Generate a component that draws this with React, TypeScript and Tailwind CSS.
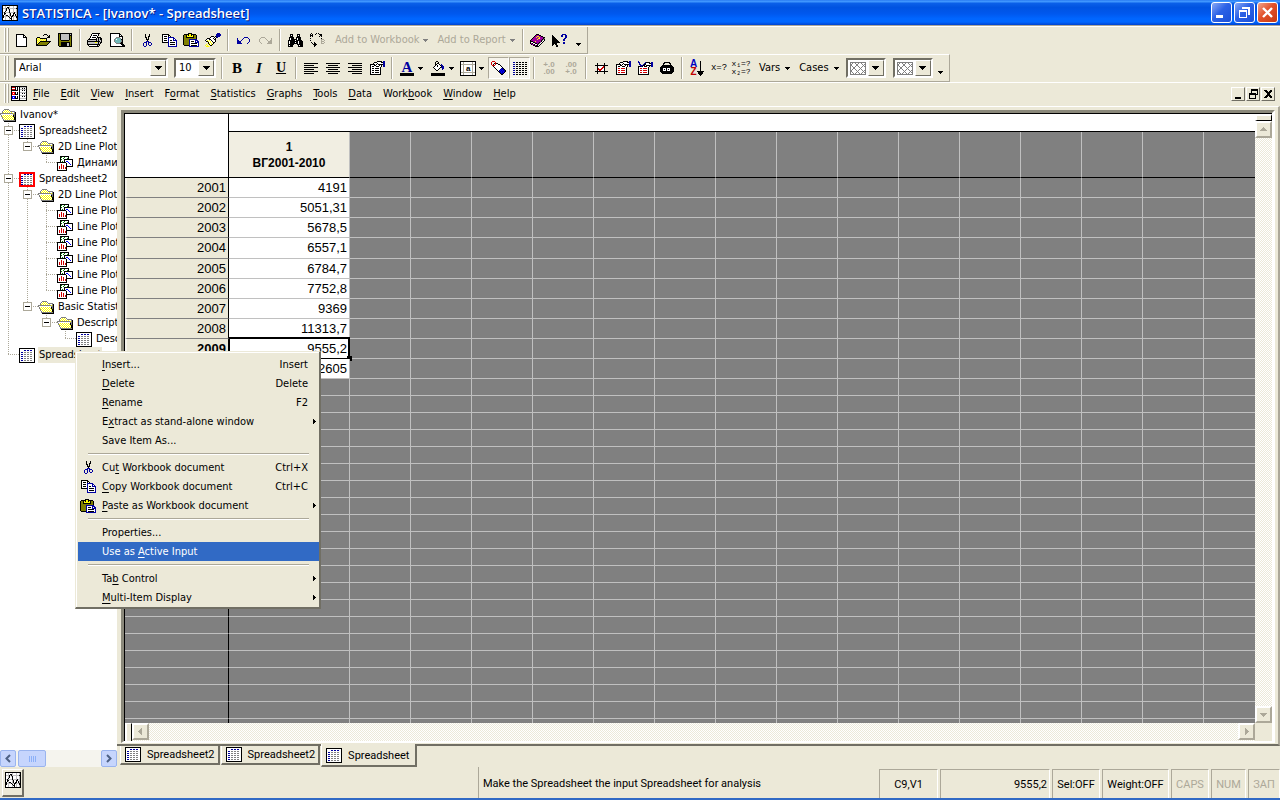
import { FC, ReactNode } from 'react'

const COLORS: Record<string, string> = {
    k: '#000000',
    w: '#ffffff',
    g: '#808080',
    l: '#c0c0c0',
    s: '#aca899',
    b: '#0000a0',
    B: '#0000ff',
    o: '#808000',
    Y: '#ffff00',
    y: '#fff68c',
    p: '#a000a0',
    r: '#d00000',
    R: '#ff0000',
    c: '#70b8b8',
    G: '#008000'
}

interface IPixels {
    rows: string[]
}

const Pixels: FC<IPixels> = ({ rows }) => {
    const width = Math.max(...rows.map((row) => row.length))
    return (
        <svg
            width={width}
            height={rows.length}
            viewBox={`0 0 ${width} ${rows.length}`}
            shapeRendering="crispEdges"
            className="shrink-0"
            aria-hidden="true"
        >
            {rows.map((row, y) =>
                row.split('').map((char, x) =>
                    COLORS[char] ? <rect key={`${x}-${y}`} x={x} y={y} width={1} height={1} fill={COLORS[char]} /> : null
                )
            )}
        </svg>
    )
}

const newIcon = [
    'kkkkkkkk...',
    'kwwwwwwkk..',
    'kwwwwwwkwk.',
    'kwwwwwwkkkk',
    'kwwwwwwwwwk',
    'kwwwwwwwwwk',
    'kwwwwwwwwwk',
    'kwwwwwwwwwk',
    'kwwwwwwwwwk',
    'kwwwwwwwwwk',
    'kwwwwwwwwwk',
    'kwwwwwwwwwk',
    'kkkkkkkkkkk'
]
const openIcon = [
    '.........kkk....',
    '........k...k.k.',
    '.............kk.',
    '..kkk.......kkk.',
    '.kYyYkkkkkkk....',
    '.kyYyYyYyYyk....',
    '.kYyYyYyYyYk....',
    '.kyYykkkkkkkkkkk',
    '.kYykoooooooook.',
    '.kykoooooooook..',
    '.kkoooooooook...',
    '.kkkkkkkkkkk....'
]
const saveIcon = [
    'kkkkkkkkkkkkkk',
    'kokllllllllklk',
    'kokllllllllkkk',
    'kokllllllllkok',
    'kokllllllllkok',
    'kokllllllllkok',
    'kokllllllllkok',
    'kookkkkkkkkook',
    'kooooooooooook',
    'kookkkkkkkkkok',
    'kookkkkkkllkok',
    'kookkkkkkllkok',
    'kookkkkkkllkok',
    '.kkkkkkkkkkkkk'
]
const printIcon = [
    '.....kkkkkkkk...',
    '....kwwwwwwk....',
    '....kwkkkkwk....',
    '...kwwwwwwk.....',
    '...kwkkkkwkkkk..',
    '..kwwwwwwk.klkk.',
    '.kkkkkkkkklklkk.',
    'kllllllllklkllk.',
    'kkkkkkkkkkkkklk.',
    'klllllllYYlklkk.',
    'kllllllllllklk..',
    'kkkkkkkkkkkkk...',
    '.kwwwwwwwwklk...',
    '..kkkkkkkkkk....'
]
const previewIcon = [
    'kkkkkkkkkk.....',
    'kwwwwwwwwkk....',
    'kwwwwwwwwkwk...',
    'kwwwwwwwwkkkk..',
    'kwwwwwggggwwk..',
    'kwwwwgccccgwk..',
    'kwwwgcwcccckk..',
    'kwwwgccccccgk..',
    'kwwwgccccccgk..',
    'kwwwwgccccgkk..',
    'kwwwwwggggkkk..',
    'kwwwwwwwwwwkkk.',
    'kwwwwwwwwwwwkkk',
    'kkkkkkkkkkkkkkk'
]
const cutIcon = [
    '..k...k..',
    '..k...k..',
    '..k..kk..',
    '..kk.k...',
    '...k.k...',
    '...kkk...',
    '....k....',
    '...bbb...',
    '.bbb.bbb.',
    'b..b.b..b',
    'b..b.b..b',
    'b..b..bb.',
    '.bb......'
]
const copyIcon = [
    'kkkkkkk........',
    'kwwwwwkk.......',
    'kwkkkwkwk......',
    'kwwwwwbbbbbb...',
    'kwkkkwbwwwwbb..',
    'kwwwwwbwwwwbwb.',
    'kwkkkwbwkkwbbbb',
    'kwwwwwbwwwwwwwb',
    'kkkkkkbwkkkkkwb',
    '......bwwwwwwwb',
    '......bwkkkkkwb',
    '......bwwwwwwwb',
    '......bbbbbbbbb'
]
const pasteIcon = [
    '.....kkkk.......',
    '.kkkkkYYkkkkk...',
    'kookYkYYkYkook..',
    'kookYYYYYYkook..',
    'kookkkkkkkkook..',
    'kooooooooooook..',
    'kooooobbbbbbbb..',
    'kooooobwwwwwbbb.',
    'kooooobwkkkwbwbb',
    'kooooobwwwwwbbbb',
    'kooooobwkkkkkkwb',
    'kooooobwwwwwwwwb',
    '.kkkkkbwkkkkkkwb',
    '......bbbbbbbbbb'
]
const brushIcon = [
    '............bbb.',
    '...........bbbbb',
    '...........bbbbb',
    '......kkk.kbbbb.',
    '.....kwwwkwkb...',
    '..kkkwwwkwk.....',
    '.kwwkkwwwkk.....',
    'kwYwYwkwwwk.....',
    '.kkYwYwkwwk.....',
    '...kwYwykk......',
    '..ykYwYwk.......',
    '.Y.ykwYk........',
    'Y.Y.ykk.........',
    '.YYYy...........'
]
const undoIcon = [
    '.......bbbb..',
    'b.....b....b.',
    'b....b......b',
    'bb..b.......b',
    'bbbb........b',
    'bbbb.......b.',
    'bbbbb.....b..'
]
const redoIcon = undoIcon.map((row) => row.split('').reverse().join('').replace(/b/g, 's'))
const findIcon = [
    '..kkk....kkk...',
    '..kwk....kwk...',
    '..kkk....kkk...',
    '.kkkkk..kkkkk..',
    '.kwkkk..kwkkk..',
    '.kwkkkkkkwkkk..',
    'kkkkkkkwkkkkkk.',
    'kwkkkkkkkkwkkkk',
    'kwkkkkkwkkwkkkk',
    'kwkkkkkkkkwkkkk',
    'kkkkkk...kkkkkk',
    'kwkkk.....kwkkk',
    'kkkkk.....kkkkk'
]
const replaceIcon = [
    '..k....k.k......',
    '.k.k..k...kkk...',
    '.kkk.......kk...',
    '.k.k......k.k...',
    '................',
    '.k..........k...',
    '............sss.',
    '.k..........s..s',
    '............sss.',
    '..k..k......s..s',
    '...k.kk.....sss.',
    '....kkkk........',
    '.....kk.........',
    '.....k..........'
]
const bookIcon = [
    '......kkk......',
    '.....kpppkk....',
    '....kppYYppkk..',
    '...kppYppYpppkk',
    '..kpppppYYpppkg',
    '.kpppppYppppkgk',
    'kppppppppppkgwk',
    'kkkppYpppppkwk.',
    'kwwkkppppkgwk..',
    'kpkwwkkpkgwk...',
    '.kppkwwkgwk....',
    '...kkpkkwk.....',
    '.....kkkk......'
]
const pointerHelpIcon = [
    '..........bbbb..',
    'k........bb..bb.',
    'kk.......bb..bb.',
    'kkk..........bb.',
    'kkkk........bb..',
    'kkkkk......bb...',
    'kkkkkk.....bb...',
    'kkkkkkk.........',
    'kkkkkkkk...bb...',
    'kkkkk......bb...',
    'kk.kk...........',
    'k...kk..........',
    '....kk..........'
]
const handIcon = [
    '.......kkkkk.bb',
    '....kkkwwwwkkbb',
    '...kwwwkwwwwwbb',
    'kkkkkwkwkkkkkbb',
    'kwwwkkwwwkwk.bb',
    'kwkkwwkkkwwk.bb',
    'kwwwwwwwwwk....',
    'kwkkwkkkkwk....',
    'kwwwwwwwwwk....',
    'kwkkwkkkkwk....',
    'kwwwwwwwwwk....',
    'kwkkwkkkkwk....',
    'kwwwwwwwwwk....',
    'kkkkkkkkkkk....'
]
const redHandIcon = handIcon.map((row, i) => (i > 6 ? row.replace('wkkwkkkkw', 'wrrwrrrrw') : row))
const checkHandTop = [
    'b..............',
    'bb.....bkkkk.bb',
    '.b....bkwwwkkbb',
    '.bb..bkkwwwwwbb',
    '..bbbkkwkkkkkbb',
    'kkkbkwkkkwwk.bb'
]
const checkHandIcon = redHandIcon.map((row, i) => checkHandTop[i] ?? row)
const fillIcon = [
    '....kk......',
    '...k..k.....',
    '...k.kk.....',
    '...kkwwk.b..',
    '...kwkwwkbb.',
    '..kwwkwwwkbb',
    '.kwwwwwwkbbb',
    '..kwwwwk..bb',
    '...kwwk...b.',
    '....kk......'
]
const eraseIcon = [
    '.rrr............',
    'r...r...........',
    'r..krkk.........',
    'r.kwrwwkk.......',
    '.rrrwwwwwk......',
    '..kwwwwwwwk.....',
    '...kwwwwwwwk....',
    '....kwwwwwbbk...',
    '.....kwwwbBbbk..',
    '......kwbBbBbbk.',
    '.......kbbBbBbk.',
    '........kbBbBk..',
    '.........kbbk...',
    '..........kk....'
]
const linesIcon = [
    'bb.kk.kk.kk.kk',
    '..............',
    'bb.kk.kk.kk.kk',
    '..............',
    'bb.kk.kk.kk.kk',
    '..............',
    'bb.kk.kk.kk.kk',
    '..............',
    'bb.kk.kk.kk.kk',
    '..............',
    'bb.kk.kk.kk.kk',
    '..............',
    'bb.kk.kk.kk.kk'
]
const frameCheckIcon = [
    '..k......k...',
    '..k......k...',
    'kkkkkkkkkkkkk',
    '..kwwwwwrk...',
    '..kwwwwrrk...',
    '..krwwrrwk...',
    '..krrrrwwk...',
    '..kwrrwwwk...',
    'kkkkkkkkkkkkk',
    '..k......k...',
    '..k......k...'
]
const lockIcon = [
    '....kkkkkk....',
    '...kk....kk...',
    '...k......k...',
    '..kkkkkkkkkk..',
    '.kkkkkkkkkkkk.',
    'kkkkkkkkkkkkkk',
    'kkkwwwkwwwkkkk',
    'kkkwkwkwkwkkkk',
    'kkkwwwkwwwkkkk',
    'kkkkkkkkkkkkkk',
    '.kkkkkkkkkkkk.',
    '..kkkkkkkkkk..'
]
const sheetIcon = [
    'kkkkkkkkkkkkkkkk',
    'kwwwwwwwwwwwwwwk',
    'kwwwwbbwbbwbbwwk',
    'kwwwwwwwwwwwwwwk',
    'kwbbwggwggwggwwk',
    'kwwwwwwwwwwwwwwk',
    'kwbbwggwggwggwwk',
    'kwwwwwwwwwwwwwwk',
    'kwbbwggwggwggwwk',
    'kwwwwwwwwwwwwwwk',
    'kwbbwggwggwggwwk',
    'kwwwwwwwwwwwwwwk',
    'kwbbwggwggwggwwk',
    'kwwwwwwwwwwwwwwk',
    'kkkkkkkkkkkkkkkk'
]
const redSheetIcon = sheetIcon.map((row, i) =>
    i < 2 || i > 12 ? 'RRRRRRRRRRRRRRRR' : `RR${row.slice(2, 14)}RR`
)
const folderIcon = [
    '....ggggg.......',
    '...gwYwYwg......',
    '..gwYwYwYwggggg.',
    '..gYwYwYwYwYwwgk',
    'gggggggggggggYgk',
    'gwwwwwwwwwwwwggk',
    '.gwYwYwYwYwYwkgk',
    '.gYwYwYwYwYwYkgk',
    '..gYwYwYwYwYwYkk',
    '..gwYwYwYwYwYwkk',
    '...gwYwYwYwYwYkk',
    '...ggggggggggggk',
    '....kkkkkkkkkkkk'
]
const plotIcon = [
    '...kkkkkkkkk....',
    '...kGwwGwwwk....',
    '...kwwGwwwGk....',
    '...kGwwkkkkkkkkk',
    '...kwwwkwwwwwwwk',
    '...kwGwkwBBwwwwk',
    'kkkkkkkkkwwBwwwk',
    'kwwwwwwwwkwwBwwk',
    'kwwwrwwwwkwwwBwk',
    'kwwwrwrwwkwwwwwk',
    'kwrwrwrwwkkkkkkk',
    'kwrwrwrwrk......',
    'kwrwrwrwrk......',
    'kwwwwwwwwk......',
    'kkkkkkkkkk......'
]
const appIcon = [
    'kkkkkkkkkkkkkkkk',
    'kwwlwwwlwwwlwwlk',
    'kwwlwkklwwwlwwlk',
    'klllklklllllllkk',
    'kwwlkwlkwwwlwwlk',
    'kwwlkwwkwwwlwwlk',
    'kwwkwwwkwwwlwwlk',
    'klkllllkllllkllk',
    'kwkkwwwlkwwkkwlk',
    'kwklwwwlkwwkwklk',
    'kkwlkkwlkwkkwklk',
    'kkllllkllkklllkk',
    'kkwlwwwkwkwlwwkk',
    'kwwlwwwlkkwlwwlk',
    'kwwlwwwlwkwlwwlk',
    'kkkkkkkkkkkkkkkk'
]
const bookWindowIcon = [
    'kkkkkkkkkkkkkkkk',
    'krrrkwkwkllllllk',
    'kwwwkwkwkwwkwkwk',
    'krrrkwkwkllllllk',
    'kkkkkkkwkwwkwkwk',
    'kwwwwwwwkwwwwwwk',
    'kRRRkwkwkllllllk',
    'kRwRkwkwkwwkwkwk',
    'kRRRkkkwkwwwwwwk',
    'kwwwwwwwkllllllk',
    'kBBBkwkwkwwkwkwk',
    'kBwBkwkwkwwwwwwk',
    'kBBBkkkwkllllllk',
    'kwwwwwwwkwwwwwwk',
    'kkkkkkkkkkkkkkkk'
]
const downArrow = ['kkkkkkk', '.kkkkk.', '..kkk..', '...k...']
const smallArrow = ['kkkkk', '.kkk.', '..k..']
const grayArrow = ['ggggg', '.ggg.', '..g..']
const rightArrow = ['k..', 'kk.', 'kkk', 'kk.', 'k..']

// "&" stands before the underlined access key
const Hot: FC<{ text: string }> = ({ text }) => {
    const [before, after] = text.split('&')
    if (after === undefined) return <>{text}</>
    return (
        <>
            {before}
            <span className="underline underline-offset-2">{after[0]}</span>
            {after.slice(1)}
        </>
    )
}

const ToolButton: FC<{ label: string; children: ReactNode }> = ({ label, children }) => (
    <button type="button" aria-label={label} className="flex h-[22px] w-[22px] shrink-0 items-center justify-center">
        {children}
    </button>
)

const Separator: FC = () => (
    <div className="flex w-2 shrink-0 justify-center self-stretch py-[2px]">
        <div className="w-[2px] border-l border-r border-l-[#aca899] border-r-white"></div>
    </div>
)

const Gripper: FC = () => (
    <div className="ml-1 mr-px flex shrink-0 gap-px self-stretch py-px">
        <div className="w-[2px] border-l border-r border-l-white border-r-[#aca899]"></div>
        <div className="w-[2px] border-l border-r border-l-white border-r-[#aca899]"></div>
    </div>
)

const Chevron: FC = () => (
    <button type="button" aria-label="Toolbar options" className="flex w-4 items-end justify-center self-stretch pb-[7px]">
        <Pixels rows={smallArrow} />
    </button>
)

const ArrowFace: FC = () => (
    <span className="pointer-events-none flex h-4 w-4 items-center justify-center border border-b-[#716f64] border-l-white border-r-[#716f64] border-t-white bg-[#ece9d8]">
        <Pixels rows={downArrow} />
    </span>
)

const Combo: FC<{ label: string; value: string; wide?: boolean }> = ({ label, value, wide }) => (
    <div
        className={`grid h-5 shrink-0 items-center border-2 border-b-white border-l-[#716f64] border-r-white border-t-[#716f64] bg-white ${wide ? 'w-[154px]' : 'w-[42px]'}`}
    >
        <select aria-label={label} className="col-start-1 row-start-1 h-4 appearance-none bg-transparent pl-[3px] leading-4 outline-none">
            <option>{value}</option>
        </select>
        <div className="pointer-events-none col-start-1 row-start-1 justify-self-end">
            <ArrowFace />
        </div>
    </div>
)

const PatternCombo: FC<{ label: string }> = ({ label }) => (
    <button
        type="button"
        aria-label={label}
        className="flex h-5 w-10 shrink-0 items-center justify-between border-2 border-b-white border-l-[#716f64] border-r-white border-t-[#716f64] bg-white pl-[2px]"
    >
        <svg width="16" height="13" viewBox="0 0 16 13" shapeRendering="crispEdges">
            <path d="M.5 .5h15v12h-15zM1 3l3-3 12 12M1 9l9-9 6 6M1 3l10 10M1 9l4 4M4 13L16 1M10 13l6-6M1 9L10 0" fill="none" stroke="#808080" />
        </svg>
        <ArrowFace />
    </button>
)

const AlignIcon: FC<{ kind: 'left' | 'center' | 'right' }> = ({ kind }) => (
    <span
        className={`flex w-[14px] flex-col gap-px ${kind === 'left' ? 'items-start' : kind === 'center' ? 'items-center' : 'items-end'}`}
    >
        {[14, 10, 14, 10, 14, 10].map((width, i) => (
            <span key={i} className="h-px bg-black" style={{ width }}></span>
        ))}
    </span>
)

const TitleBar: FC = () => (
    <header className="flex h-[26px] shrink-0 items-center border-b border-b-[#aca899] bg-[linear-gradient(#2a7cf2_0%,#3f96fe_6%,#0a5fe8_14%,#0053e1_30%,#0058ee_55%,#0066ff_75%,#0066ff_88%,#0043cf_100%)] px-[2px]">
        <Pixels rows={appIcon} />
        <h1 className="ml-1 flex-1 whitespace-nowrap font-['Open_Sans','Noto_Sans',sans-serif] text-[13px] font-semibold text-white [text-shadow:1px_1px_#0a1883]">
            STATISTICA - [Ivanov* - Spreadsheet]
        </h1>
        <div className="flex gap-[2px]">
            <button type="button" aria-label="Minimize" className="h-[21px] w-[21px] rounded-[3px] border border-white bg-[linear-gradient(135deg,#8aa9f5,#2c62e6_45%,#1a4fd8)]">
                <svg width="19" height="19"><path d="M4 12h7v3H4z" fill="#fff" /></svg>
            </button>
            <button type="button" aria-label="Restore" className="h-[21px] w-[21px] rounded-[3px] border border-white bg-[linear-gradient(135deg,#8aa9f5,#2c62e6_45%,#1a4fd8)]">
                <svg width="19" height="19" shapeRendering="crispEdges">
                    <path d="M4 7h8v8H4zM5 9v5h6V9zM7 4h8v8h-2V6H7z" fill="#fff" fillRule="evenodd" />
                </svg>
            </button>
            <button type="button" aria-label="Close" className="h-[21px] w-[21px] rounded-[3px] border border-white bg-[linear-gradient(135deg,#f0a48c,#e2512a_45%,#c63a12)]">
                <svg width="19" height="19"><path d="M5 5l9 9M14 5l-9 9" stroke="#fff" strokeWidth="2.4" /></svg>
            </button>
        </div>
    </header>
)

const StandardToolbar: FC = () => (
    <div role="toolbar" aria-label="Standard" className="flex h-[27px] w-fit shrink-0 items-center border-b border-r border-b-[#aca899] border-r-[#aca899]">
        <Gripper />
        <ToolButton label="New"><Pixels rows={newIcon} /></ToolButton>
        <ToolButton label="Open"><Pixels rows={openIcon} /></ToolButton>
        <ToolButton label="Save"><Pixels rows={saveIcon} /></ToolButton>
        <Separator />
        <ToolButton label="Print"><Pixels rows={printIcon} /></ToolButton>
        <ToolButton label="Print Preview"><Pixels rows={previewIcon} /></ToolButton>
        <Separator />
        <ToolButton label="Cut"><Pixels rows={cutIcon} /></ToolButton>
        <ToolButton label="Copy"><Pixels rows={copyIcon} /></ToolButton>
        <ToolButton label="Paste"><Pixels rows={pasteIcon} /></ToolButton>
        <ToolButton label="Format Painter"><Pixels rows={brushIcon} /></ToolButton>
        <Separator />
        <ToolButton label="Undo"><Pixels rows={undoIcon} /></ToolButton>
        <ToolButton label="Redo"><Pixels rows={redoIcon} /></ToolButton>
        <Separator />
        <ToolButton label="Find"><Pixels rows={findIcon} /></ToolButton>
        <ToolButton label="Replace"><Pixels rows={replaceIcon} /></ToolButton>
        <button type="button" className="ml-[7px] flex items-center gap-1 whitespace-nowrap text-[#aca899]">
            Add to Workbook
            <Pixels rows={grayArrow} />
        </button>
        <button type="button" className="ml-[9px] flex items-center gap-1 whitespace-nowrap text-[#aca899]">
            Add to Report
            <Pixels rows={grayArrow} />
        </button>
        <div className="w-1"></div>
        <Separator />
        <ToolButton label="Help"><Pixels rows={bookIcon} /></ToolButton>
        <ToolButton label="What is this?"><Pixels rows={pointerHelpIcon} /></ToolButton>
        <Chevron />
    </div>
)

const FormatToolbar: FC = () => (
    <div role="toolbar" aria-label="Formatting" className="flex h-7 w-fit shrink-0 items-center border-b border-r border-t border-b-[#aca899] border-r-[#aca899] border-t-white">
        <Gripper />
        <div className="ml-1 flex gap-[6px]">
            <Combo label="Font" value="Arial" wide />
            <Combo label="Font size" value="10" />
        </div>
        <div className="w-[2px]"></div>
        <Separator />
        <ToolButton label="Bold"><span className="font-['Liberation_Serif',serif] text-[15px] font-bold">B</span></ToolButton>
        <ToolButton label="Italic"><span className="font-['Liberation_Serif',serif] text-[15px] font-bold italic">I</span></ToolButton>
        <ToolButton label="Underline"><span className="font-['Liberation_Serif',serif] text-[14px] font-bold underline">U</span></ToolButton>
        <Separator />
        <ToolButton label="Align left"><AlignIcon kind="left" /></ToolButton>
        <ToolButton label="Center"><AlignIcon kind="center" /></ToolButton>
        <ToolButton label="Align right"><AlignIcon kind="right" /></ToolButton>
        <ToolButton label="Format cells"><Pixels rows={handIcon} /></ToolButton>
        <Separator />
        <ToolButton label="Font color">
            <span className="border-b-[3px] border-b-black px-[2px] font-['Liberation_Serif',serif] text-[15px] font-bold leading-[12px] text-[#0000a0]">A</span>
        </ToolButton>
        <Pixels rows={smallArrow} />
        <div className="w-1"></div>
        <ToolButton label="Background color">
            <span className="flex flex-col items-center border-b-[3px] border-b-black px-px pb-[2px]"><Pixels rows={fillIcon} /></span>
        </ToolButton>
        <Pixels rows={smallArrow} />
        <div className="w-[3px]"></div>
        <ToolButton label="Borders">
            <svg width="16" height="15" shapeRendering="crispEdges">
                <path d="M.5 .5h15v14H.5z" fill="#fff" stroke="#000" />
                <path d="M3.5 1v13M12.5 1v13M1 3.5h14M1 11.5h14" stroke="#aca899" />
                <text x="6" y="10" fontSize="8" fontWeight="bold" fontFamily="Liberation Sans">a</text>
            </svg>
        </ToolButton>
        <Pixels rows={smallArrow} />
        <div className="ml-1 flex">
            {[eraseIcon, linesIcon].map((rows, i) => (
                <button
                    key={i}
                    type="button"
                    aria-pressed="true"
                    aria-label={i ? 'Show gridlines' : 'Mark cells'}
                    className="flex h-[22px] w-[21px] items-center justify-center border border-b-white border-l-[#aca899] border-r-white border-t-[#aca899] bg-[#f6f4ec]"
                >
                    <Pixels rows={rows} />
                </button>
            ))}
        </div>
        <Separator />
        <ToolButton label="Increase decimals">
            <span className="text-right font-['Liberation_Sans',sans-serif] text-[8px] font-bold leading-[7px] text-[#aca899]">+.0<br />.00</span>
        </ToolButton>
        <ToolButton label="Decrease decimals">
            <span className="text-right font-['Liberation_Sans',sans-serif] text-[8px] font-bold leading-[7px] text-[#aca899]">.00<br />+.0</span>
        </ToolButton>
        <Separator />
        <ToolButton label="Mark selection"><Pixels rows={frameCheckIcon} /></ToolButton>
        <ToolButton label="Variable specs"><Pixels rows={redHandIcon} /></ToolButton>
        <ToolButton label="All specs"><Pixels rows={checkHandIcon} /></ToolButton>
        <ToolButton label="Lock"><Pixels rows={lockIcon} /></ToolButton>
        <Separator />
        <ToolButton label="Sort">
            <span className="flex items-center font-['Liberation_Sans',sans-serif] text-[10px] font-bold leading-[8px]">
                <span><span className="text-[#0000c0]">A</span><br /><span className="text-[#c00000]">Z</span></span>
                <svg width="7" height="15" shapeRendering="crispEdges">
                    <path d="M3 0h1v10h3v1H6v2H5v1H4v1H3v-1H2v-1H1v-2H0v-1h3z" fill="#000" />
                </svg>
            </span>
        </ToolButton>
        <ToolButton label="Recalculate"><span className="font-['Liberation_Mono',monospace] text-[9px]">x=?</span></ToolButton>
        <ToolButton label="Batch transform">
            <span className="font-['Liberation_Mono',monospace] text-[8px] leading-[8px]">x₁=?<br />x₂=?</span>
        </ToolButton>
        <button type="button" className="ml-[7px] flex items-center gap-[5px]">Vars <Pixels rows={smallArrow} /></button>
        <button type="button" className="ml-[9px] flex items-center gap-[5px]">Cases <Pixels rows={smallArrow} /></button>
        <div className="ml-[7px] flex gap-[7px]">
            <PatternCombo label="Case state pattern" />
            <PatternCombo label="Variable state pattern" />
        </div>
        <Chevron />
    </div>
)

const menus = ['&File', '&Edit', '&View', '&Insert', 'F&ormat', '&Statistics', '&Graphs', '&Tools', '&Data', 'Work&book', '&Window', '&Help']
const windowButtons = [
    ['Minimize workbook', 'M3 9h6v2H3z'],
    ['Restore workbook', 'M4 1h7v6H9v4H2V5h2zM5 3v2h4v1h1V3zM3 7v3h5V7z'],
    ['Close workbook', 'M2 2h2l2 2l2-2h2v1L7 6l3 3v1H8L6 8L4 10H2V9l3-3l-3-3z']
]

const MenuBar: FC = () => (
    <nav className="flex h-6 shrink-0 items-center border-t border-t-white pb-[2px] pr-[5px]">
        <Gripper />
        <div className="ml-px"><Pixels rows={bookWindowIcon} /></div>
        <div className="ml-[6px] flex gap-[11px]">
            {menus.map((menu) => (
                <button key={menu} type="button"><Hot text={menu} /></button>
            ))}
        </div>
        <div className="ml-auto flex gap-px">
            {windowButtons.map(([label, d]) => (
                <button
                    key={label}
                    type="button"
                    aria-label={label}
                    className="h-[14px] w-[14px] border border-b-[#716f64] border-l-white border-r-[#716f64] border-t-white"
                >
                    <svg width="12" height="12" shapeRendering="crispEdges"><path d={d} fillRule="evenodd" /></svg>
                </button>
            ))}
        </div>
    </nav>
)

interface ITreeRow {
    guides: string
    icon: string[]
    label: string
    active?: boolean
}

// guides: one letter a level, "|" passes by, "T"/"L" join, "+"/"-" join with an open box (with/without more below)
const tree: ITreeRow[] = [
    { guides: '', icon: folderIcon, label: 'Ivanov*' },
    { guides: '+', icon: sheetIcon, label: 'Spreadsheet2' },
    { guides: '|-', icon: folderIcon, label: '2D Line Plots' },
    { guides: '| L', icon: plotIcon, label: 'Динамика' },
    { guides: '+', icon: redSheetIcon, label: 'Spreadsheet2' },
    { guides: '|+', icon: folderIcon, label: '2D Line Plots' },
    { guides: '||T', icon: plotIcon, label: 'Line Plot' },
    { guides: '||T', icon: plotIcon, label: 'Line Plot' },
    { guides: '||T', icon: plotIcon, label: 'Line Plot' },
    { guides: '||T', icon: plotIcon, label: 'Line Plot' },
    { guides: '||T', icon: plotIcon, label: 'Line Plot' },
    { guides: '||L', icon: plotIcon, label: 'Line Plot' },
    { guides: '|-', icon: folderIcon, label: 'Basic Statistics' },
    { guides: '| -', icon: folderIcon, label: 'Descriptive' },
    { guides: '|  L', icon: sheetIcon, label: 'Descriptive' },
    { guides: 'L', icon: sheetIcon, label: 'Spreadsheet', active: true }
]

const Guide: FC<{ kind: string }> = ({ kind }) => (
    <svg width="19" height="16" shapeRendering="crispEdges" className="shrink-0" aria-hidden="true">
        {kind !== ' ' && (
            <path d={kind === 'L' || kind === '-' ? 'M8.5 0v8' : 'M8.5 0v16'} stroke="#aca899" strokeDasharray="1 1" />
        )}
        {'TL+-'.includes(kind) && <path d="M8 7.5h11" stroke="#aca899" strokeDasharray="1 1" />}
        {'+-'.includes(kind) && (
            <>
                <path d="M4.5 3.5h8v8h-8z" fill="#fff" stroke="#aca899" />
                <path d="M6 7.5h5" stroke="#000" />
            </>
        )}
    </svg>
)

const WorkbookTree: FC = () => (
    <aside className="flex w-[117px] shrink-0 flex-col bg-white">
        <ul className="min-h-0 flex-1 overflow-hidden pt-px">
            {tree.map((row, i) => (
                <li key={i} className="flex h-4 items-center whitespace-nowrap">
                    {row.guides.split('').map((kind, level) => <Guide key={level} kind={kind} />)}
                    <Pixels rows={row.icon} />
                    <span className={`ml-[3px] px-px leading-4 ${row.active ? 'bg-[#ece9d8]' : ''}`}>{row.label}</span>
                </li>
            ))}
        </ul>
        <div className="flex h-[17px] shrink-0 bg-[#f5f4ee]">
            <button type="button" aria-label="Scroll left" className="flex w-4 items-center justify-center rounded-[2px] border border-[#9ab4ee] bg-[#c6d5fd]">
                <svg width="8" height="9"><path d="M6 1L2.5 4.5L6 8" fill="none" stroke="#4d6185" strokeWidth="2" /></svg>
            </button>
            <div className="ml-[2px] flex w-7 items-center justify-center gap-px rounded-[2px] border border-[#9ab4ee] bg-[#c6d5fd]">
                {[0, 1, 2, 3].map((i) => <span key={i} className="h-[6px] w-px bg-[#8cb0f8]"></span>)}
            </div>
            <button type="button" aria-label="Scroll right" className="ml-auto flex w-4 items-center justify-center rounded-[2px] border border-[#9ab4ee] bg-[#c6d5fd]">
                <svg width="8" height="9"><path d="M2 1L5.5 4.5L2 8" fill="none" stroke="#4d6185" strokeWidth="2" /></svg>
            </button>
        </div>
    </aside>
)

const cases = [
    ['2001', '4191'],
    ['2002', '5051,31'],
    ['2003', '5678,5'],
    ['2004', '6557,1'],
    ['2005', '6784,7'],
    ['2006', '7752,8'],
    ['2007', '9369'],
    ['2008', '11313,7'],
    ['2009', '9555,2'],
    ['2010', '12605']
]
const blankColumns = Array.from({ length: 32 }, (_, i) => i)
const blankRows = Array.from({ length: 40 }, (_, i) => i)

const DataGrid: FC = () => (
    <table className="border-separate border-spacing-0 font-['Liberation_Sans',Arial,sans-serif] text-[13px] leading-4">
        <thead>
            <tr>
                <td rowSpan={2} className="w-[104px] min-w-[104px] border-b border-r border-black bg-white p-0"></td>
                <td colSpan={blankColumns.length + 1} className="h-[18px] border-b border-black bg-white p-0"></td>
            </tr>
            <tr>
                <th scope="col" className="h-[46px] w-[121px] min-w-[121px] border-b border-r border-b-black border-r-[#c0c0c0] bg-[#f1eee2] p-0 text-[12px] font-bold">
                    1<br />ВГ2001-2010
                </th>
                {blankColumns.map((col) => (
                    <td key={col} className="w-[61px] min-w-[61px] border-b border-r border-b-black border-r-[#c0c0c0] p-0"></td>
                ))}
            </tr>
        </thead>
        <tbody>
            {cases.map(([year, value], i) => {
                const current = year === '2009'
                return (
                    <tr key={year} className={i === 3 ? 'h-[21px]' : 'h-5'}>
                        <th
                            scope="row"
                            className={`border-b border-l-2 border-r border-b-[#808080] border-l-[#f6f4ec] border-r-black bg-[#ece9d8] p-0 pr-[2px] text-right ${current ? 'font-bold' : 'font-normal'}`}
                        >
                            {year}
                        </th>
                        <td className="relative border-b border-r border-[#c0c0c0] bg-white p-0 pr-[2px] text-right">
                            {value}
                            {current && (
                                <>
                                    <span className="absolute -bottom-[2px] -right-px -top-[2px] left-0 border-2 border-l border-black"></span>
                                    <span className="absolute -bottom-[3px] -right-[3px] h-[5px] w-[5px] bg-black"></span>
                                </>
                            )}
                        </td>
                        {blankColumns.map((col) => <td key={col} className="border-b border-r border-[#c0c0c0] p-0"></td>)}
                    </tr>
                )
            })}
            {blankRows.map((row) => (
                <tr key={row} className="h-[17px]">
                    <td className="border-b border-r border-b-[#c0c0c0] border-r-black p-0"></td>
                    <td className="border-b border-r border-[#c0c0c0] p-0"></td>
                    {blankColumns.map((col) => <td key={col} className="border-b border-r border-[#c0c0c0] p-0"></td>)}
                </tr>
            ))}
        </tbody>
    </table>
)

const ScrollButton: FC<{ label: string; d: string }> = ({ label, d }) => (
    <button
        type="button"
        aria-label={label}
        className="flex h-[17px] w-[17px] shrink-0 items-center justify-center border-2 border-b-[#aca899] border-l-white border-r-[#aca899] border-t-white bg-[#ece9d8]"
    >
        <svg width="9" height="9" shapeRendering="crispEdges"><path d={d} fill="#aca899" /></svg>
    </button>
)

const Spreadsheet: FC = () => (
    <div className="flex min-h-0 flex-1 flex-col border-b-2 border-r-2 border-t border-b-[#716f64] border-r-[#aca899] border-t-white pb-px pl-[4px] pr-[3px] pt-[3px]">
        <div className="flex min-h-0 flex-1 flex-col border-b-2 border-l-[3px] border-r-[3px] border-t-[3px] border-b-white border-l-[#8a887a] border-r-white border-t-[#8a887a]">
            <div className="flex min-h-0 flex-1 flex-col border-l border-t border-black">
                <div className="flex min-h-0 flex-1">
                    <div className="min-w-0 flex-1 overflow-hidden bg-[#808080]">
                        <DataGrid />
                    </div>
                    <div className="flex w-[17px] shrink-0 flex-col bg-[repeating-conic-gradient(#ffffff_0_25%,#ece9d8_0_50%)] bg-[length:2px_2px]">
                        <div className="h-[7px] shrink-0 border-2 border-b border-r border-b-black border-l-white border-r-black border-t-white bg-[#ece9d8]"></div>
                        <ScrollButton label="Scroll up" d="M4 2h1v1h1v1h1v1h1v1H1V5h1V4h1V3h1z" />
                        <div className="flex-1"></div>
                        <ScrollButton label="Scroll down" d="M1 3h7v1H7v1H6v1H5v1H4V6H3V5H2V4H1z" />
                    </div>
                </div>
                <div className="flex h-[18px] shrink-0 bg-[#ece9d8]">
                    <div className="flex min-w-0 flex-1 bg-[repeating-conic-gradient(#ffffff_0_25%,#ece9d8_0_50%)] bg-[length:2px_2px]">
                        <div className="w-[7px] shrink-0 border-l-2 border-r border-t border-l-white border-r-black border-t-white bg-[#ece9d8]"></div>
                        <ScrollButton label="Scroll left" d="M6 1v7H5V7H4V6H3V5H2V4h1V3h1V2h1V1z" />
                        <div className="flex-1"></div>
                        <ScrollButton label="Scroll right" d="M3 1v7h1V7h1V6h1V5h1V4H6V3H5V2H4V1z" />
                    </div>
                    <div className="w-[17px]"></div>
                </div>
            </div>
        </div>
    </div>
)

const SheetTabs: FC = () => (
    <div role="tablist" className="flex h-[21px] shrink-0 items-start gap-px pl-[3px] font-['Roboto','Noto_Sans',sans-serif]">
        {['Spreadsheet2', 'Spreadsheet2', 'Spreadsheet'].map((name, i) => (
            <button
                key={i}
                type="button"
                role="tab"
                aria-selected={i === 2}
                className={`flex items-center gap-[6px] border-b-2 border-l border-r-2 border-b-[#716f64] border-l-white border-r-[#716f64] ${i === 2 ? '-mt-[2px] h-[23px] bg-[#ece9d8] pl-1 pr-[6px] pt-[2px]' : 'h-[19px] pl-1 pr-[3px]'}`}
            >
                <Pixels rows={sheetIcon} />
                {name}
            </button>
        ))}
    </div>
)

interface IMenuItem {
    text: string
    keys?: string
    icon?: string[]
    submenu?: boolean
    selected?: boolean
}

const contextMenu: IMenuItem[][] = [
    [
        { text: '&Insert...', keys: 'Insert' },
        { text: '&Delete', keys: 'Delete' },
        { text: '&Rename', keys: 'F2' },
        { text: 'E&xtract as stand-alone window', submenu: true },
        { text: 'Save Item As...' }
    ],
    [
        { text: 'Cu&t Workbook document', keys: 'Ctrl+X', icon: cutIcon },
        { text: '&Copy Workbook document', keys: 'Ctrl+C', icon: copyIcon },
        { text: '&Paste as Workbook document', icon: pasteIcon, submenu: true }
    ],
    [{ text: 'Properties...' }, { text: 'Use as &Active Input', selected: true }],
    [
        { text: 'Ta&b Control', submenu: true },
        { text: '&Multi-Item Display', submenu: true }
    ]
]

const ContextMenu: FC = () => (
    <div
        role="menu"
        className="absolute left-[75px] top-[245px] w-[246px] border border-b-2 border-r-2 border-b-[#716f64] border-l-[#ece9d8] border-r-[#716f64] border-t-[#ece9d8] bg-[#ece9d8]"
    >
        <div className="border-l border-t border-white pl-px pt-[2px]">
            {contextMenu.map((group, i) => (
                <div key={i}>
                    {i > 0 && (
                        <div className="mx-[10px] flex h-2 items-center">
                            <div className="h-[2px] flex-1 border-b border-t border-b-white border-t-[#aca899]"></div>
                        </div>
                    )}
                    {group.map((item) => (
                        <button
                            key={item.text}
                            type="button"
                            role="menuitem"
                            className={`flex h-[19px] w-full items-center whitespace-nowrap pr-[2px] ${item.selected ? 'bg-[#316ac5] text-white' : ''}`}
                        >
                            <span className="flex w-6 shrink-0 items-center justify-center pr-1">{item.icon && <Pixels rows={item.icon} />}</span>
                            <span><Hot text={item.text} /></span>
                            <span className="ml-auto pr-[5px]">{item.keys}</span>
                            <span className="w-1">{item.submenu && <Pixels rows={rightArrow} />}</span>
                        </button>
                    ))}
                </div>
            ))}
        </div>
    </div>
)

const Pane: FC<{ className: string; children: ReactNode }> = ({ className, children }) => (
    <div className={`mt-[2px] flex shrink-0 items-center whitespace-nowrap border-l border-r border-t border-l-[#aca899] border-r-white border-t-[#aca899] pt-px ${className}`}>
        {children}
    </div>
)

const StatusBar: FC = () => (
    <footer className="flex h-[33px] shrink-0 gap-[2px] border-b-2 border-b-[#316ac5] font-['Roboto','Noto_Sans',sans-serif]">
        <button
            type="button"
            aria-label="STATISTICA"
            className="ml-[2px] mt-[2px] flex h-7 w-[22px] shrink-0 items-start justify-center border border-b-2 border-r-2 border-b-[#716f64] border-l-white border-r-[#716f64] border-t-white pt-[2px]"
        >
            <Pixels rows={appIcon} />
        </button>
        <p className="ml-[452px] flex min-w-0 flex-1 items-center whitespace-nowrap border-l border-l-[#aca899] pl-1 pt-[3px]">
            Make the Spreadsheet the input Spreadsheet for analysis
        </p>
        <Pane className="w-[59px] justify-center">C9,V1</Pane>
        <Pane className="w-[110px] justify-end pr-[2px]">9555,2</Pane>
        <Pane className="w-12 justify-center">Sel:OFF</Pane>
        <Pane className="w-[67px] justify-center">Weight:OFF</Pane>
        <Pane className="w-[38px] justify-center text-[#aca899]">CAPS</Pane>
        <Pane className="w-[35px] justify-center text-[#aca899]">NUM</Pane>
        <Pane className="w-[32px] justify-center text-[#aca899]">ЗАП</Pane>
    </footer>
)

export default function App() {
    return (
        <div className="flex h-screen flex-col overflow-hidden bg-[#ece9d8] font-['DejaVu_Sans_Condensed','Noto_Sans',sans-serif] text-[11px] leading-[14px] text-black">
            <TitleBar />
            <div className="shrink-0 border-t border-t-white">
                <StandardToolbar />
                <FormatToolbar />
            </div>
            <MenuBar />
            <main className="relative flex min-h-0 flex-1">
                <WorkbookTree />
                <section className="flex min-w-0 flex-1 flex-col">
                    <Spreadsheet />
                    <SheetTabs />
                </section>
                <ContextMenu />
            </main>
            <StatusBar />
        </div>
    )
}
